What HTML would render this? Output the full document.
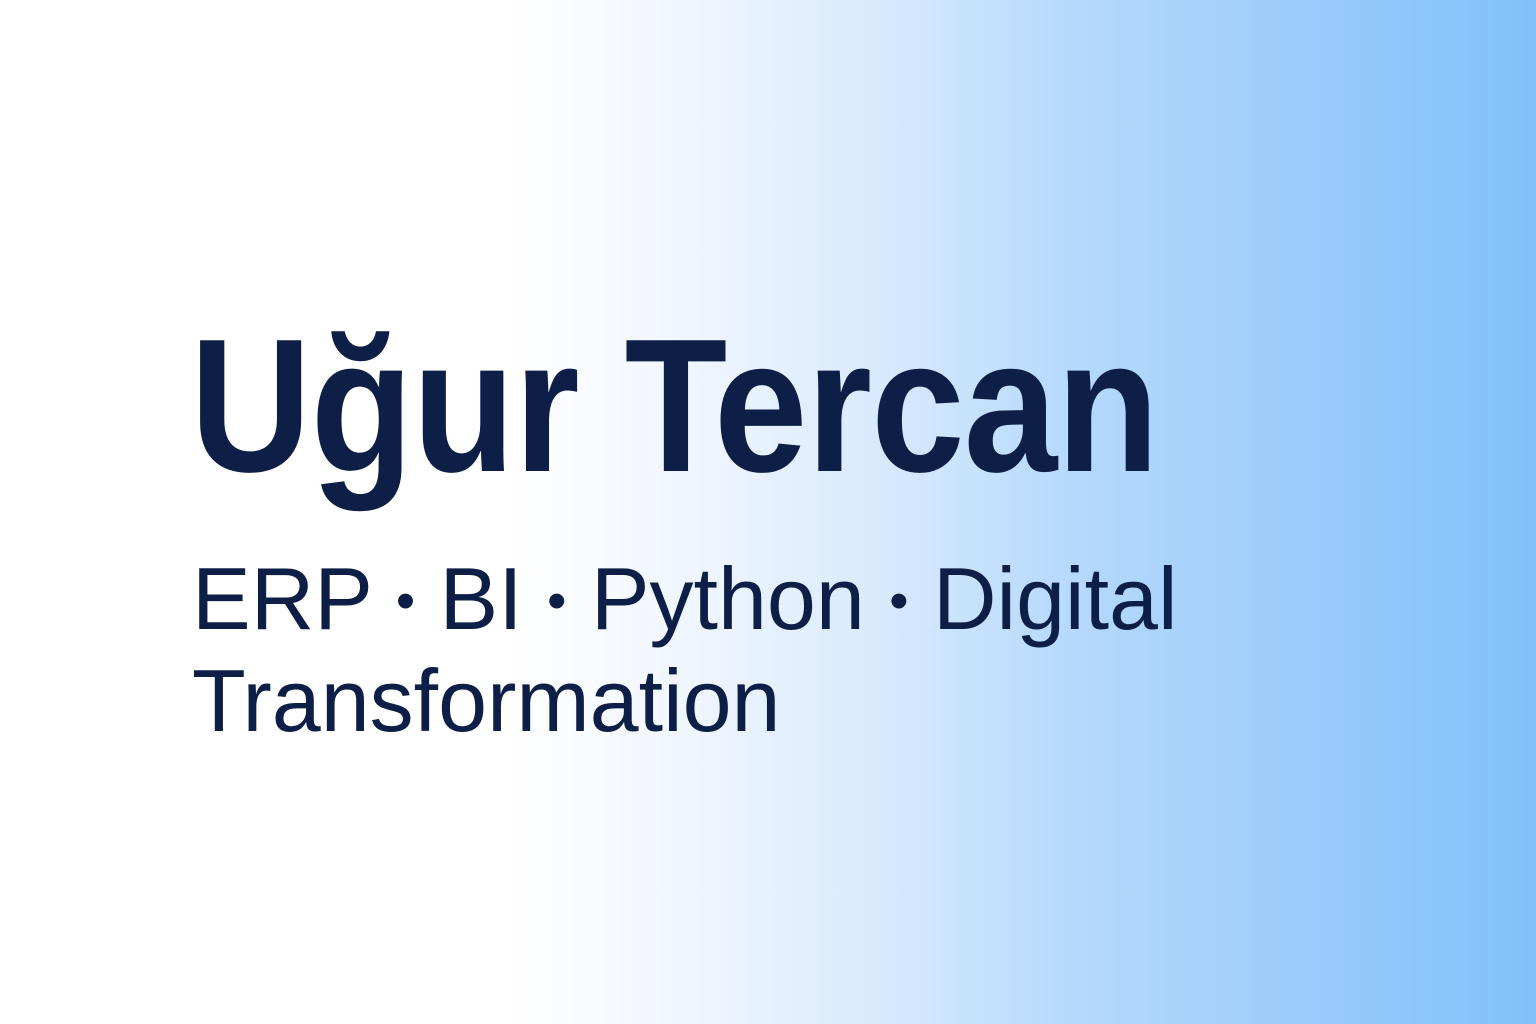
<!DOCTYPE html>
<html><head><meta charset="utf-8"><style>
html,body{margin:0;padding:0}
body{width:1536px;height:1024px;overflow:hidden;position:relative;
background:linear-gradient(90deg,#ffffff 0%,#ffffff 33%,#eef5fe 46%,#d6e9fd 58%,#b8dafc 69%,#9ecdfb 83%,#82c0fa 100%);
font-family:"Liberation Sans",sans-serif;color:#0e1f47}
.t{position:absolute;left:190px;top:311px;font-size:190px;font-weight:bold;line-height:1;white-space:nowrap;transform:scaleX(0.885);transform-origin:0 0;letter-spacing:-1px}
.s{position:absolute;left:192px;top:548px;font-size:88px;line-height:102px;white-space:nowrap}
.b{font-size:55px;line-height:0;position:relative;top:-10px}
</style></head><body>
<div class="t">Uğur Tercan</div>
<div class="s">ERP <span class="b">•</span> BI <span class="b">•</span> Python <span class="b">•</span> Digital<br>Transformation</div>
</body></html>
